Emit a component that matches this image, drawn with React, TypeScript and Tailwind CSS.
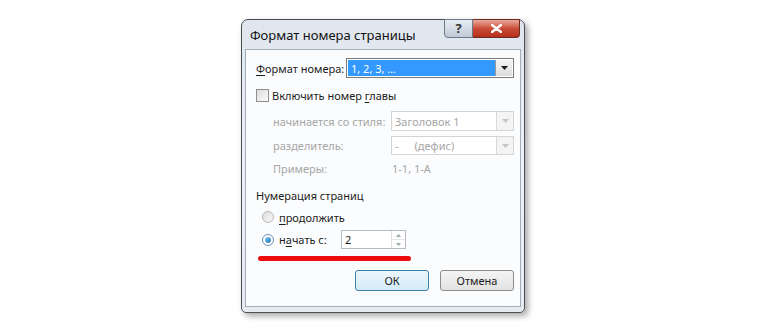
import React from "react";

const font = { fontFamily: '"Segoe UI", "Noto Sans", "Open Sans", sans-serif' };

function ComboArrow({ disabled }: { disabled?: boolean }) {
  return (
    <div
      className={`w-[17px] h-full flex items-center justify-center border-l ${
        disabled ? "border-[#d9d9d9] bg-[#f4f4f4]" : "border-[#9a9a9a] bg-gradient-to-b from-[#f4f4f4] to-[#dcdcdc]"
      }`}
    >
      <svg width="7" height="4" viewBox="0 0 7 4">
        <path d="M0 0 L7 0 L3.5 4 Z" fill={disabled ? "#c4c4c4" : "#1a1a1a"} />
      </svg>
    </div>
  );
}

export default function App() {
  return (
    <div className="w-[770px] h-[330px] bg-white pl-[241px] pt-[19px]" style={font}>
      <div className="w-[284px] h-[294px] rounded-t-[7px] rounded-b-[5px] border border-[#4a4f56] bg-gradient-to-b from-[#dfe6ee] via-[#eef2f6] to-[#e6ebf0] shadow-[3px_3px_6px_rgba(0,0,0,0.35)] flex flex-col px-[3px] pb-[5px]">
        {/* title bar */}
        <div className="h-[29px] flex justify-between shrink-0">
          <div className="pl-[5px] pt-[7px] text-[13px] text-[#111] leading-[16px] whitespace-nowrap">Формат номера страницы</div>
          <div className="flex h-[19px] mt-[-1px] mr-[1px]">
            <div className="w-[29px] h-full border border-[#6d7886] rounded-bl-[4px] bg-gradient-to-b from-[#e8edf3] via-[#d3dbe5] to-[#bfc9d6] flex items-center justify-center text-[13px] font-bold text-[#333] leading-none">
              ?
            </div>
            <div className="w-[47px] h-full border border-l-0 border-[#6b2a22] rounded-br-[4px] bg-gradient-to-b from-[#e9a99b] via-[#c94c37] to-[#b52f1a] flex items-center justify-center">
              <svg width="11" height="9" viewBox="0 0 11 9">
                <path d="M1 1 L10 8 M10 1 L1 8" stroke="#fff" strokeWidth="2.4" strokeLinecap="round" />
              </svg>
            </div>
          </div>
        </div>
        {/* client area */}
        <div className="flex-1 bg-[#fbfcfd] border border-[#a3adb9] flex flex-col text-[11px] text-[#1c1c1c] leading-[15px] pl-[10px] pr-[6px] whitespace-nowrap">
          {/* format row */}
          <div className="flex items-center mt-[8px] h-[20px]">
            <div className="w-[90px]">
              <span className="underline underline-offset-2">Ф</span>ормат номера:
            </div>
            <div className="flex-1 h-[20px] border border-[#7a7a7a] bg-white flex p-[1px]">
              <div className="flex-1 bg-[#3399ff] text-white pl-[3px] flex items-center">1, 2, 3, …</div>
              <ComboArrow />
            </div>
          </div>
          {/* checkbox */}
          <div className="flex items-center mt-[10px] h-[14px]">
            <div className="w-[13px] h-[13px] border border-[#8f8f8f] bg-gradient-to-br from-[#dcdcdc] to-[#fbfbfb] mr-[3px]" />
            <span>
              Включить номер <span className="underline underline-offset-2">г</span>лавы
            </span>
          </div>
          {/* disabled rows */}
          <div className="flex items-center mt-[9px] h-[20px] text-[#a6a6a6] pl-[17px]">
            <div className="w-[118px]">начинается со стиля:</div>
            <div className="flex-1 h-[20px] border border-[#d4d4d4] bg-white flex">
              <div className="flex-1 pl-[3px] flex items-center">Заголовок 1</div>
              <ComboArrow disabled />
            </div>
          </div>
          <div className="flex items-center mt-[5px] h-[19px] text-[#a6a6a6] pl-[17px]">
            <div className="w-[118px]">разделитель:</div>
            <div className="flex-1 h-[19px] border border-[#d4d4d4] bg-white flex">
              <div className="flex-1 pl-[3px] flex items-center">
                -<span className="ml-[16px]">(дефис)</span>
              </div>
              <ComboArrow disabled />
            </div>
          </div>
          <div className="flex items-center mt-[5px] h-[16px] text-[#a6a6a6] pl-[17px]">
            <div className="w-[118px]">Примеры:</div>
            <div className="pl-[1px]">1-1, 1-А</div>
          </div>
          {/* numbering */}
          <div className="mt-[11px] h-[16px] flex items-center">Нумерация страниц</div>
          <div className="flex items-center mt-[6px] h-[16px] pl-[6px]">
            <div className="w-[12px] h-[12px] rounded-full border border-[#b8b8b8] bg-gradient-to-br from-[#dcdcdc] to-[#fafafa] mr-[5px]" />
            <span>
              <span className="underline underline-offset-2">п</span>родолжить
            </span>
          </div>
          <div className="flex items-center mt-[5px] h-[19px] pl-[6px]">
            <div className="w-[12px] h-[12px] rounded-full border border-[#6f8fb0] bg-white flex items-center justify-center mr-[5px]">
              <div className="w-[6px] h-[6px] rounded-full bg-gradient-to-br from-[#7fd0f5] to-[#1a6fb3]" />
            </div>
            <span className="w-[62px]">
              н<span className="underline underline-offset-2">а</span>чать с:
            </span>
            <div className="w-[65px] h-[19px] border border-[#b5bcc6] bg-white flex">
              <div className="flex-1 pl-[3px] flex items-center">2</div>
              <div className="w-[14px] flex flex-col border-l border-[#e0e0e0]">
                <div className="flex-1 flex items-center justify-center">
                  <svg width="5" height="3" viewBox="0 0 5 3"><path d="M0 3 L5 3 L2.5 0 Z" fill="#9aa" /></svg>
                </div>
                <div className="flex-1 flex items-center justify-center border-t border-[#e8e8e8]">
                  <svg width="5" height="3" viewBox="0 0 5 3"><path d="M0 0 L5 0 L2.5 3 Z" fill="#9aa" /></svg>
                </div>
              </div>
            </div>
          </div>
          {/* red underline */}
          <div className="mt-[7px] ml-[2px] w-[153px] h-[5px] rounded-full bg-[#ee0d0d]" />
          {/* buttons */}
          <div className="flex justify-end gap-[11px] mt-[9px]">
            <div className="w-[74px] h-[21px] rounded-[3px] border border-[#3c7fb1] bg-gradient-to-b from-[#ecf6fc] to-[#d5ebf8] flex items-center justify-center">
              ОК
            </div>
            <div className="w-[74px] h-[21px] rounded-[3px] border border-[#8c8c8c] bg-gradient-to-b from-[#f4f4f4] to-[#e2e2e2] flex items-center justify-center">
              Отмена
            </div>
          </div>
        </div>
      </div>
    </div>
  );
}
